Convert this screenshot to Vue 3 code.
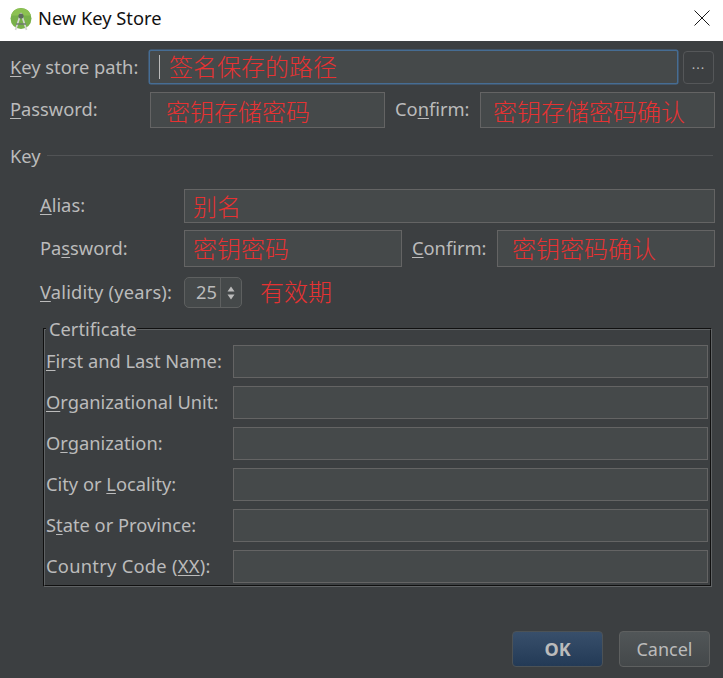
<script setup>
const certRows = [
  { pre: '', key: 'F', post: 'irst and Last Name:' },
  { pre: '', key: 'O', post: 'rganizational Unit:' },
  { pre: 'O', key: 'r', post: 'ganization:' },
  { pre: 'City or ', key: 'L', post: 'ocality:' },
  { pre: 'S', key: 't', post: 'ate or Province:' },
  { pre: 'Country Code (', key: 'XX', post: '):' },
]
</script>

<template>
  <div class="dialog">
    <header class="titlebar">
      <svg class="logo" width="22" height="24" viewBox="0 0 22 24">
        <circle cx="11" cy="10.5" r="10.5" fill="#78b04a" />
        <path d="M1 7.5A10.5 10.5 0 0 1 21 7.5Z" fill="#8cc152" />
        <path d="M11 5 L5.5 22 M11 5 L16.5 22" stroke="#d4d6d4" stroke-width="1.7" fill="none" />
        <circle cx="11" cy="8" r="2.6" fill="#5f6b5f" />
        <path d="M6 16 H16" stroke="#6d7a6d" stroke-width="1.4" />
      </svg>
      <span class="title">New Key Store</span>
      <svg class="close" width="16" height="16" viewBox="0 0 16 16">
        <path d="M0.5 0.5 L15.5 15.5 M15.5 0.5 L0.5 15.5" stroke="#1a1a1a" stroke-width="1" />
      </svg>
    </header>

    <main class="content">
      <div class="row row-path">
        <label class="lbl lbl-top"><u>K</u>ey store path:</label>
        <div class="field focus">
          <i class="caret"></i>
          <span class="red">签名保存的路径</span>
        </div>
        <button class="browse">...</button>
      </div>

      <div class="row row-pass">
        <label class="lbl lbl-top"><u>P</u>assword:</label>
        <div class="field f-pass"><span class="red r-pass">密钥存储密码</span></div>
        <label class="lbl lbl-conf">Co<u>n</u>firm:</label>
        <div class="field f-conf"><span class="red r-conf">密钥存储密码确认</span></div>
      </div>

      <div class="separator">
        <span class="sep-text">Key</span>
        <span class="sep-line"></span>
      </div>

      <section class="keybox">
        <div class="row row-alias">
          <label class="lbl lbl-key"><u>A</u>lias:</label>
          <div class="field grow"><span class="red r-key">别名</span></div>
        </div>
        <div class="row row-keypass">
          <label class="lbl lbl-key">Pa<u>s</u>sword:</label>
          <div class="field f-kpass"><span class="red r-key">密钥密码</span></div>
          <label class="lbl lbl-kconf"><u>C</u>onfirm:</label>
          <div class="field grow"><span class="red r-kconf">密钥密码确认</span></div>
        </div>
        <div class="row row-valid">
          <label class="lbl lbl-key lbl-valid"><u>V</u>alidity (years):</label>
          <div class="spinner">
            <span class="spin-val">25</span>
            <span class="spin-arrows">
              <svg width="8" height="14" viewBox="0 0 8 14">
                <path d="M4 0.5 L7.5 5.5 H0.5Z M0.5 8.5 H7.5 L4 13.5Z" fill="#bbbbbb" />
              </svg>
            </span>
          </div>
          <span class="red r-valid">有效期</span>
        </div>

        <fieldset class="cert">
          <legend class="legend">Certificate</legend>
          <div v-for="r in certRows" :key="r.post" class="cert-row">
            <label class="lbl cert-lbl">{{ r.pre }}<u>{{ r.key }}</u>{{ r.post }}</label>
            <div class="field grow"></div>
          </div>
        </fieldset>
      </section>

      <footer class="actions">
        <button class="btn ok">OK</button>
        <button class="btn cancel">Cancel</button>
      </footer>
    </main>
  </div>
</template>

<style>
html, body { margin: 0; padding: 0; background: #3c3f41; }
</style>

<style scoped>
.dialog {
  width: 723px;
  height: 678px;
  display: flex;
  flex-direction: column;
  font-family: "Noto Sans", "Noto Sans CJK SC", sans-serif;
  font-size: 18.3px;
  color: #bbbbbb;
  overflow: hidden;
}
.titlebar {
  height: 41px;
  background: #ffffff;
  display: flex;
  align-items: center;
  padding: 0 13px 5px 10px;
  box-sizing: border-box;
  color: #111111;
  flex: none;
}
.logo { margin-top: 3px; }
.title { margin-left: 6px; margin-top: -1px; font-size: 18.3px; flex: 1; }
.content {
  flex: 1;
  background: #3c3f41;
  padding: 9px 8px 0 10px;
  display: flex;
  flex-direction: column;
  box-sizing: border-box;
}
.row { display: flex; align-items: center; }
.row-path { height: 34px; }
.row-pass { height: 36px; margin-top: 8px; }
.lbl { white-space: nowrap; line-height: 24px; }
.lbl-top { width: 139px; flex: none; }
.field {
  background: #45494a;
  border: 1px solid #646464;
  box-sizing: border-box;
  height: 100%;
  display: flex;
  align-items: center;
}
.focus {
  width: 529px;
  flex: none;
  border: 1px solid #466d94;
  box-shadow: 0 0 0 0.5px #466d94;
  border-radius: 2px;
}
.caret {
  width: 1px;
  height: 24px;
  background: #bbbbbb;
  margin-left: 9px;
}
.red {
  color: #e63232;
  font-family: "Noto Sans CJK SC", sans-serif;
  font-weight: 300;
  font-size: 24px;
  line-height: 28px;
  white-space: nowrap;
}
.focus .red { margin-left: 9px; margin-top: -2px; }
.browse {
  width: 31px;
  height: 33px;
  margin-left: 5px;
  padding: 0 0 6px;
  background: #3c3f41;
  border: 1px solid #555759;
  border-radius: 4px;
  color: #bbbbbb;
  font-family: "Noto Sans", sans-serif;
  font-size: 13px;
  letter-spacing: 1px;
  flex: none;
}
.f-pass { width: 235px; flex: none; margin-left: 1px; }
.r-pass { margin-left: 15px; }
.lbl-conf { margin-left: 10px; width: 85px; flex: none; }
.f-conf { width: 235px; flex: none; }
.r-conf { margin-left: 12px; }
.row-pass .red { margin-top: 2px; }
.row-pass .lbl { margin-top: -2px; }
.separator {
  display: flex;
  align-items: center;
  height: 24px;
  margin-top: 16px;
  margin-right: 2px;
}
.sep-text { line-height: 24px; }
.sep-line { flex: 1; height: 1px; background: #515355; margin-left: 6px; margin-top: -2px; }
.keybox {
  padding-left: 30px;
  margin-top: 21px;
}
.row-alias { height: 34px; }
.row-keypass { height: 37px; margin-top: 7px; }
.row-valid { height: 31px; margin-top: 10px; }
.row-alias .lbl, .row-keypass .lbl, .lbl-valid { margin-top: -2px; }
.row-keypass .red { margin-top: -2px; }
.lbl-key { width: 144px; flex: none; }
.lbl-valid { letter-spacing: 0.18px; }
.grow { flex: 1; min-width: 0; }
.r-key { margin-left: 8px; }
.f-kpass { width: 218px; flex: none; }
.lbl-kconf { margin-left: 10px; width: 85px; flex: none; }
.r-kconf { margin-left: 14px; }
.spinner {
  width: 58px;
  height: 31px;
  border: 1px solid #5e6060;
  border-radius: 5px;
  box-sizing: border-box;
  background: #45494a;
  display: flex;
  align-items: stretch;
  flex: none;
}
.spin-val {
  flex: 1;
  text-align: right;
  padding-right: 3px;
  line-height: 28px;
  border-right: 1px solid #5e6060;
}
.spin-arrows {
  width: 20px;
  display: flex;
  align-items: center;
  justify-content: center;
  flex: none;
}
.r-valid { margin-left: 18px; margin-top: -3px; }
.cert {
  margin: 10px 3px 0 3px;
  padding: 5px 2px 2px 1px;
  border: 2px groove #606365;
  box-sizing: border-box;
  min-width: 0;
  display: flex;
  flex-direction: column;
  gap: 8px;
}
.legend {
  padding: 0 0 0 3px;
  margin-left: 0;
  line-height: 22px;
}
.cert-row { display: flex; height: 33px; flex: none; align-items: center; }
.cert-lbl { width: 187px; flex: none; margin-top: -2px; }
.cert-row:last-child .cert-lbl { letter-spacing: 0.28px; }
.actions {
  display: flex;
  justify-content: flex-end;
  gap: 16px;
  padding-right: 5px;
  margin-top: auto;
  margin-bottom: 11px;
}
.btn {
  width: 91px;
  height: 36px;
  border-radius: 4px;
  font-family: "Noto Sans", sans-serif;
  font-size: 18px;
  padding: 0;
}
.ok {
  background: linear-gradient(#384f6b, #233a56);
  border: 1px solid #4c5256;
  color: #bbbbbb;
  font-weight: 700;
}
.cancel {
  background: linear-gradient(#515658, #44484a);
  border: 1px solid #5e6060;
  color: #bbbbbb;
}
u { text-underline-offset: 2px; text-decoration-thickness: 1px; }
</style>
